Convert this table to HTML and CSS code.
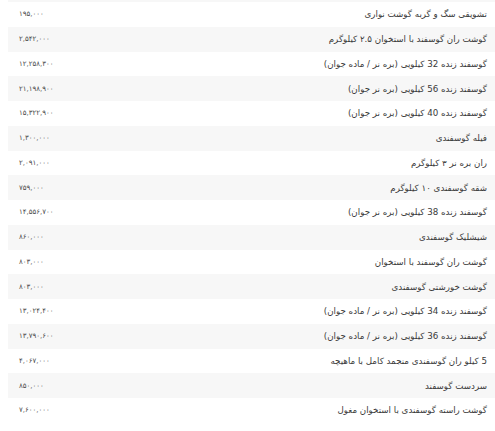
FILE: index.html
```html
<!DOCTYPE html>
<html lang="fa" dir="rtl">
<head>
<meta charset="utf-8">
<link rel="stylesheet" href="styles.css">
</head>
<body>
<div class="table">
  <div class="row prev"></div>
  <div class="row"><span class="name">تشویقی سگ و گربه گوشت نواری</span><span class="price">۱۹۵,۰۰۰</span></div>
  <div class="row"><span class="name">گوشت ران گوسفند با استخوان ۲.۵ کیلوگرم</span><span class="price">۲,۵۴۲,۰۰۰</span></div>
  <div class="row"><span class="name">گوسفند زنده 32 کیلویی (بره نر / ماده جوان)</span><span class="price">۱۲,۲۵۸,۳۰۰</span></div>
  <div class="row"><span class="name">گوسفند زنده 56 کیلویی (بره نر جوان)</span><span class="price">۲۱,۱۹۸,۹۰۰</span></div>
  <div class="row"><span class="name">گوسفند زنده 40 کیلویی (بره نر جوان)</span><span class="price">۱۵,۳۲۲,۹۰۰</span></div>
  <div class="row"><span class="name">فیله گوسفندی</span><span class="price">۱,۳۰۰,۰۰۰</span></div>
  <div class="row"><span class="name">ران بره نر ۳ کیلوگرم</span><span class="price">۲,۰۹۱,۰۰۰</span></div>
  <div class="row"><span class="name">شقه گوسفندی ۱۰ کیلوگرم</span><span class="price">۷۵۹,۰۰۰</span></div>
  <div class="row"><span class="name">گوسفند زنده 38 کیلویی (بره نر جوان)</span><span class="price">۱۴,۵۵۶,۷۰۰</span></div>
  <div class="row"><span class="name">شیشلیک گوسفندی</span><span class="price">۸۶۰,۰۰۰</span></div>
  <div class="row"><span class="name">گوشت ران گوسفند با استخوان</span><span class="price">۸۰۳,۰۰۰</span></div>
  <div class="row"><span class="name">گوشت خورشتی گوسفندی</span><span class="price">۸۰۳,۰۰۰</span></div>
  <div class="row"><span class="name">گوسفند زنده 34 کیلویی (بره نر / ماده جوان)</span><span class="price">۱۳,۰۲۴,۴۰۰</span></div>
  <div class="row"><span class="name">گوسفند زنده 36 کیلویی (بره نر / ماده جوان)</span><span class="price">۱۳,۷۹۰,۶۰۰</span></div>
  <div class="row"><span class="name">5 کیلو ران گوسفندی منجمد کامل با ماهیچه</span><span class="price">۴,۰۶۷,۰۰۰</span></div>
  <div class="row"><span class="name">سردست گوسفند</span><span class="price">۸۵۰,۰۰۰</span></div>
  <div class="row"><span class="name">گوشت راسته گوسفندی با استخوان مغول</span><span class="price">۷,۶۰۰,۰۰۰</span></div>
</div>
</body>
</html>
```
FILE: styles.css
```css
html, body {
  margin: 0;
  padding: 0;
  background: #ffffff;
}
body {
  padding-left: 8px;
  font-family: "DejaVu Sans", sans-serif;
  color: #3a3a3a;
}
.table {
  display: flex;
  flex-direction: column;
  margin-top: -22.75px;
}
.row {
  height: 24.75px;
  display: flex;
  align-items: center;
  justify-content: space-between;
  padding: 0 8px 0 11px;
}
.row:nth-child(odd) {
  background: #f7f7f7;
}
.name {
  font-size: 8.7px;
}
.price {
  font-size: 7px;
  color: #4a4a4a;
}
```
